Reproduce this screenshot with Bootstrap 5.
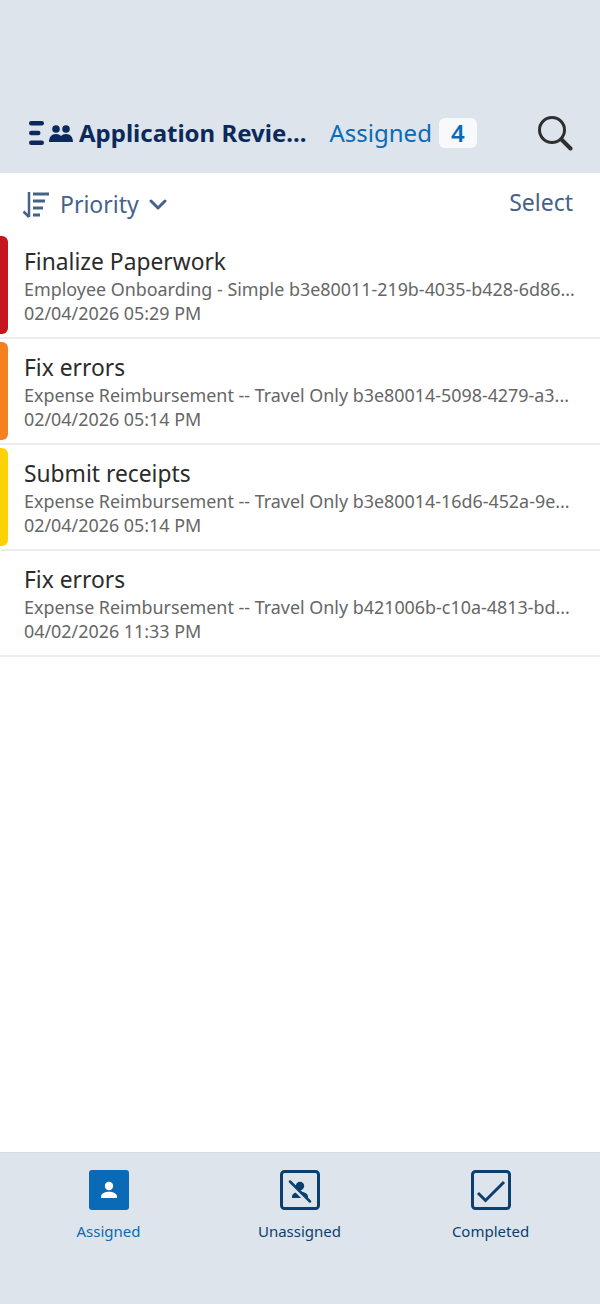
<!DOCTYPE html>
<html lang="en">

<head>
  <meta charset="UTF-8">
  <meta name="viewport" content="width=device-width, initial-scale=1.0">
  <title>Application Review</title>
  <link href="https://cdn.jsdelivr.net/npm/bootstrap@5.3.0/dist/css/bootstrap.min.css" rel="stylesheet">
  <style>
    body { font-family: "Noto Sans", sans-serif; height: 1304px; overflow: hidden; background: #fff; }
    .app-shell { height: 1304px; }
    .top-bar { height: 173px; background: #dde4ec; padding: 93px 27px 0 29px; }
    .menu-icon { width: 15px; height: 24px; margin-right: 5px; }
    .people-icon { width: 24px; height: 17px; margin-right: 6px; }
    .app-title { font-size: 24px; font-weight: 700; color: #0b2a5b; line-height: 32px; white-space: nowrap; }
    .assigned-label { font-size: 24px; color: #0b6ab5; line-height: 32px; margin-left: 23px; }
    .count-pill { width: 38px; height: 30px; background: #f8f9fb; color: #0b6ab5; font-size: 24px; font-weight: 600; border-radius: 6px; margin-left: 7px; line-height: 30px; }
    .search-btn { width: 36px; height: 36px; line-height: 0; }
    .sort-bar { height: 63px; padding: 0 27px 1px 22px; color: #466289; }
    .sort-label { font-size: 23px; margin-left: 10px; line-height: 32px; }
    .chevron-icon { width: 18px; height: 11px; margin-left: 10px; }
    .select-link { font-size: 23px; line-height: 30px; color: #466289; margin-top: -4px; }
    .task-row { height: 103px; margin-bottom: 3px; border-bottom: 2px solid #ececec; padding: 11px 24px 0 24px; }
    .priority-mark { position: absolute; left: 0; top: 0; width: 8px; height: 98px; border-radius: 0 6px 6px 0; }
    .task-title { font-size: 22.8px; line-height: 30px; color: #2b2b2b; white-space: nowrap; }
    .task-meta { font-size: 17.9px; line-height: 24px; color: #666; white-space: nowrap; }
    .bottom-tabs { height: 152px; background: #dde4ec; border-top: 1px solid #d3dbe4; padding: 17px 1px 0 0; }
    .tab-item { width: 191px; color: #0c3f6e; font-size: 15px; line-height: 20px; }
    .tab-item svg { width: 40px; height: 40px; margin-bottom: 11px; }
    .tab-active { color: #0b6ab5; }
  </style>
</head>

<body>
  <div class="app-shell d-flex flex-column">

    <div class="top-bar d-flex align-items-center">
      <svg class="menu-icon flex-shrink-0" viewBox="0 0 15 24">
        <g fill="#0b2a5b"><rect x="0" y="0" width="15" height="4.400" rx="2.200" /><rect x="0" y="9.800" width="11.500" height="4.400" rx="2.200" /><rect x="0" y="19.600" width="15" height="4.400" rx="2.200" /></g>
      </svg>
      <svg class="people-icon flex-shrink-0" viewBox="0 0 24 17">
        <g fill="#0b2a5b">
          <circle cx="7" cy="4" r="3.800" /><circle cx="17" cy="4" r="3.800" />
          <path d="M0 17c0-5 2.500-8 7-8 2.300 0 3.800.7 5 2 1.200-1.300 2.700-2 5-2 4.500 0 7 3 7 8z" />
        </g>
      </svg>
      <div class="app-title">Application Revie...</div>
      <div class="assigned-label">Assigned</div>
      <div class="count-pill text-center">4</div>
      <div class="search-btn ms-auto">
        <svg viewBox="0 0 36 36" width="36" height="36" fill="none" stroke="#2f2f2f" stroke-width="3" stroke-linecap="round">
          <circle cx="15" cy="15" r="12.500" /><path d="M24.500 24.500l9 9" stroke-width="4" />
        </svg>
      </div>
    </div>

    <div class="sort-bar d-flex align-items-center">
      <svg width="28" height="28" viewBox="0 0 28 28" fill="none" stroke="#466289" stroke-width="2.500">
        <path d="M7 2v25M1.500 21.500L7 27" />
        <path d="M11 4h16M11 11h12M11 18h10M11 25h7" stroke-width="3" />
      </svg>
      <span class="sort-label">Priority</span>
      <svg class="chevron-icon" viewBox="0 0 18 11" fill="none" stroke="#466289" stroke-width="3" stroke-linecap="round" stroke-linejoin="round">
        <path d="M2 2l7 7 7-7" />
      </svg>
      <span class="select-link ms-auto">Select</span>
    </div>

    <div class="flex-grow-1">
      <div class="task-row position-relative">
        <span class="priority-mark" style="background: #c4161c"></span>
        <div class="task-title">Finalize Paperwork</div>
        <div class="task-meta">Employee Onboarding - Simple b3e80011-219b-4035-b428-6d86...</div>
        <div class="task-meta">02/04/2026 05:29 PM</div>
      </div>
      <div class="task-row position-relative">
        <span class="priority-mark" style="background: #f58020"></span>
        <div class="task-title">Fix errors</div>
        <div class="task-meta">Expense Reimbursement -- Travel Only b3e80014-5098-4279-a3...</div>
        <div class="task-meta">02/04/2026 05:14 PM</div>
      </div>
      <div class="task-row position-relative">
        <span class="priority-mark" style="background: #fdd205"></span>
        <div class="task-title">Submit receipts</div>
        <div class="task-meta">Expense Reimbursement -- Travel Only b3e80014-16d6-452a-9e...</div>
        <div class="task-meta">02/04/2026 05:14 PM</div>
      </div>
      <div class="task-row position-relative">
        <div class="task-title">Fix errors</div>
        <div class="task-meta">Expense Reimbursement -- Travel Only b421006b-c10a-4813-bd...</div>
        <div class="task-meta">04/02/2026 11:33 PM</div>
      </div>
    </div>

    <div class="bottom-tabs d-flex justify-content-center">
      <div class="tab-item tab-active d-flex flex-column align-items-center">
        <svg viewBox="0 0 40 40">
          <rect width="40" height="40" rx="3" fill="#0b6ab5" />
          <circle cx="20" cy="16" r="4.200" fill="#fff" />
          <path d="M12 28v-1.500c0-3 4-4.700 8-4.700s8 1.700 8 4.700V28z" fill="#fff" />
        </svg>
        <span>Assigned</span>
      </div>
      <div class="tab-item d-flex flex-column align-items-center">
        <svg viewBox="0 0 40 40">
          <rect x="1.500" y="1.500" width="37" height="37" rx="3" fill="none" stroke="#0c3f6e" stroke-width="3" />
          <circle cx="20" cy="16" r="4.200" fill="#0c3f6e" />
          <path d="M12 28v-1.500c0-3 4-4.700 8-4.700s8 1.700 8 4.700V28z" fill="#0c3f6e" />
          <path d="M10 14l19 19" stroke="#dde4ec" stroke-width="4" />
          <path d="M10 11.500l20 20" stroke="#0c3f6e" stroke-width="2.500" stroke-linecap="round" />
        </svg>
        <span>Unassigned</span>
      </div>
      <div class="tab-item d-flex flex-column align-items-center">
        <svg viewBox="0 0 40 40" fill="none">
          <rect x="1.500" y="1.500" width="37" height="37" rx="3" stroke="#0c3f6e" stroke-width="3" />
          <path d="M7 23l7.500 7.500L33 12" stroke="#0c3f6e" stroke-width="3" />
        </svg>
        <span>Completed</span>
      </div>
    </div>

  </div>

  <script src="https://cdn.jsdelivr.net/npm/bootstrap@5.3.0/dist/js/bootstrap.bundle.min.js"></script>
</body>

</html>
